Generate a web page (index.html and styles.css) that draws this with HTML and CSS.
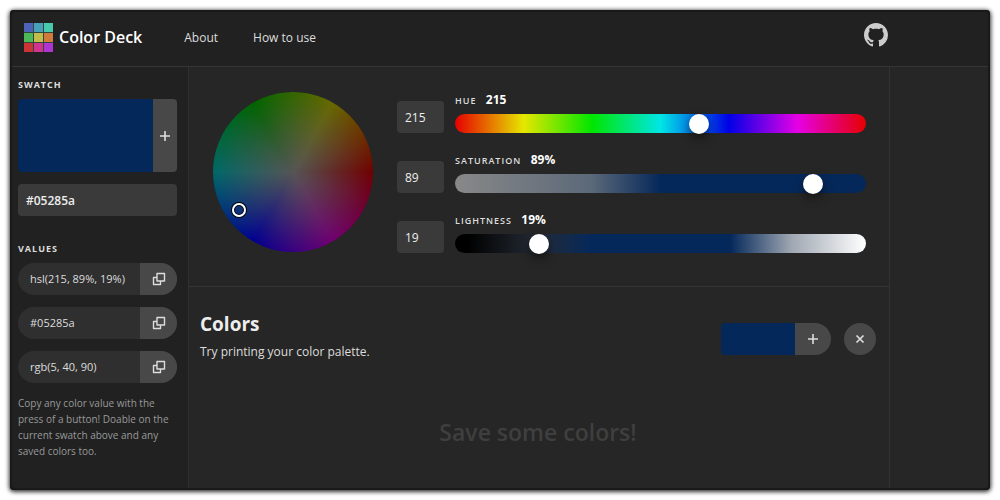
FILE: index.html
```html
<!DOCTYPE html>
<html lang="en">
<head>
  <meta charset="UTF-8" />
  <meta name="viewport" content="width=device-width, initial-scale=1.0"/>
  <title>Color Deck</title>
  <link rel="stylesheet" href="styles.css">
</head>
<body>
  <svg class="sprite" aria-hidden="true">
    <symbol id="copy" viewBox="0 0 14 14">
      <path d="M5 1.5h7.5V9H5z M8.5 9v3.500h-7v-7H5" fill="none" stroke="currentColor" stroke-width="1.400" stroke-linejoin="round"/>
    </symbol>
    <symbol id="plus" viewBox="0 0 12 12">
      <path d="M6 1v10M1 6h10" stroke="currentColor" stroke-width="1.600"/>
    </symbol>
  </svg>

  <div class="app">
    <header class="header">
      <a class="brand" href="#">
        <svg width="29" height="29" viewBox="0 0 29 29" aria-hidden="true">
          <rect width="29" height="29" fill="#31463f"/>
          <rect width="9" height="9" fill="#4d63b9"/>
          <rect x="10" width="9" height="9" fill="#4a9fb8"/>
          <rect x="20" width="9" height="9" fill="#48c9ab"/>
          <rect y="10" width="9" height="9" fill="#4db858"/>
          <rect x="10" y="10" width="9" height="9" fill="#c2bd48"/>
          <rect x="20" y="10" width="9" height="9" fill="#d07a3c"/>
          <rect y="20" width="9" height="9" fill="#cb3437"/>
          <rect x="10" y="20" width="9" height="9" fill="#d1348f"/>
          <rect x="20" y="20" width="9" height="9" fill="#b035d0"/>
        </svg>
        <span>Color Deck</span>
      </a>
      <nav class="nav">
        <a href="#about">About</a>
        <a href="#how">How to use</a>
      </nav>
      <a class="github" href="#github" aria-label="GitHub">
        <svg width="24" height="24" viewBox="0 0 16 16" fill="currentColor" aria-hidden="true">
          <path d="M8 0C3.580 0 0 3.580 0 8c0 3.540 2.290 6.530 5.470 7.590.4.070.55-.17.55-.38 0-.19-.01-.82-.01-1.490-2.010.37-2.530-.49-2.690-.94-.09-.23-.48-.94-.82-1.130-.28-.15-.68-.52-.01-.53.63-.01 1.080.58 1.230.82.72 1.210 1.870.87 2.330.66.07-.52.28-.87.51-1.070-1.780-.2-3.640-.89-3.640-3.950 0-.87.31-1.590.82-2.150-.08-.2-.36-1.020.08-2.120 0 0 .67-.21 2.200.82.64-.18 1.320-.27 2-.27s1.360.09 2 .27c1.530-1.040 2.200-.82 2.200-.82.44 1.100.16 1.920.08 2.120.51.56.82 1.270.82 2.150 0 3.070-1.870 3.750-3.650 3.950.29.25.54.73.54 1.480 0 1.070-.01 1.930-.01 2.200 0 .21.15.46.55.38A8.010 8.010 0 0 0 16 8c0-4.420-3.580-8-8-8z"/>
        </svg>
      </a>
    </header>

    <aside class="sidebar">
      <h2 class="label">Swatch</h2>
      <div class="swatch">
        <div class="swatch-color"></div>
        <button class="swatch-add" aria-label="Save color"><svg class="icon"><use href="#plus"/></svg></button>
      </div>
      <input class="field hex" type="text" value="#05285a" aria-label="Hex color">

      <h2 class="label">Values</h2>
      <div class="values">
        <div class="value">
          <span>hsl(215, 89%, 19%)</span>
          <button aria-label="Copy hsl"><svg class="icon-copy"><use href="#copy"/></svg></button>
        </div>
        <div class="value">
          <span>#05285a</span>
          <button aria-label="Copy hex"><svg class="icon-copy"><use href="#copy"/></svg></button>
        </div>
        <div class="value">
          <span>rgb(5, 40, 90)</span>
          <button aria-label="Copy rgb"><svg class="icon-copy"><use href="#copy"/></svg></button>
        </div>
      </div>
      <p class="help">Copy any color value with the press of a button! Doable on the current swatch above and any saved colors too.</p>
    </aside>

    <main class="main">
      <section class="picker">
        <div class="wheel"><div class="wheel-handle"></div></div>
        <div class="sliders">
          <div class="row">
            <input class="field" type="text" value="215" aria-label="Hue value">
            <div class="slider">
              <label for="hue">Hue <b>215</b></label>
              <input class="range hue" id="hue" type="range" min="0" max="360" value="215">
            </div>
          </div>
          <div class="row">
            <input class="field" type="text" value="89" aria-label="Saturation value">
            <div class="slider">
              <label for="saturation">Saturation <b>89%</b></label>
              <input class="range saturation" id="saturation" type="range" min="0" max="100" value="89">
            </div>
          </div>
          <div class="row">
            <input class="field" type="text" value="19" aria-label="Lightness value">
            <div class="slider">
              <label for="lightness">Lightness <b>19%</b></label>
              <input class="range lightness" id="lightness" type="range" min="0" max="100" value="19">
            </div>
          </div>
        </div>
      </section>

      <section class="colors">
        <div class="colors-head">
          <div>
            <h1>Colors</h1>
            <p>Try printing your color palette.</p>
          </div>
          <div class="actions">
            <div class="mini-swatch">
              <div class="mini-color"></div>
              <button class="mini-add" aria-label="Save color"><svg class="icon"><use href="#plus"/></svg></button>
            </div>
            <button class="clear" aria-label="Clear colors">
              <svg width="10" height="10" viewBox="0 0 10 10" aria-hidden="true"><path d="M1.500 1.500l7 7M8.500 1.500l-7 7" stroke="currentColor" stroke-width="1.700"/></svg>
            </button>
          </div>
        </div>
        <p class="empty">Save some colors!</p>
      </section>
    </main>
  </div>
</body>
</html>
```

FILE: styles.css
```css
* {
  box-sizing: border-box;
}
body {
  margin: 0;
  padding: 10px;
  background: #fff;
  font-family: 'Open Sans', sans-serif;
  font-size: 12px;
  color: #ddd;
}
h1, h2, p {
  margin: 0;
}
a {
  color: inherit;
  text-decoration: none;
}
button {
  display: flex;
  align-items: center;
  justify-content: center;
  padding: 0;
  border: none;
  background: #484848;
  color: #ddd;
  cursor: pointer;
}
.sprite {
  display: none;
}
.icon {
  width: 12px;
  height: 12px;
}
.icon-copy {
  width: 14px;
  height: 14px;
}

.app {
  display: grid;
  grid-template-columns: 179px minmax(0, 1fr) 100px;
  grid-template-rows: 57px 1fr;
  min-height: calc(100vh - 20px);
  background: #262626;
  border-radius: 4px;
  overflow: hidden;
  box-shadow: 0 1px 4px 1px rgba(0, 0, 0, 0.8);
}
/* darker rim around the window */
.app::after {
  content: "";
  position: absolute;
  inset: 10px;
  border: 2px solid #191919;
  border-radius: 4px;
  pointer-events: none;
}

.header {
  grid-column: 1 / -1;
  display: flex;
  align-items: center;
  padding: 0 102px 2px 14px;
  background: #212121;
  border-bottom: 1px solid #353535;
}
.brand {
  display: flex;
  align-items: center;
  gap: 6px;
  font-size: 16px;
  font-weight: 600;
  color: #fff;
}
.nav {
  display: flex;
  gap: 35px;
  margin-left: 42px;
}
.github {
  height: 24px;
  margin: 0 0 4px auto;
  color: #ccc;
}

.sidebar {
  padding: 10px 11px 20px 8px;
  background: #212121;
  border-right: 1px solid #303030;
}
.label {
  margin-bottom: 6px;
  font-size: 9px;
  line-height: 16px;
  font-weight: 700;
  letter-spacing: 1px;
  text-transform: uppercase;
}
.swatch {
  display: flex;
  height: 73px;
  margin-bottom: 12px;
  border-radius: 4px;
  overflow: hidden;
}
.swatch-color {
  flex: 1;
  background: #05285a;
}
.swatch-add {
  width: 24px;
}
.field {
  width: 47px;
  height: 32px;
  padding: 0 8px;
  border: none;
  border-radius: 4px;
  background: #3a3a3a;
  color: #eee;
  font: inherit;
}
.hex {
  width: 100%;
  margin-bottom: 25px;
  font-weight: 600;
}
.values {
  display: flex;
  flex-direction: column;
  gap: 12px;
}
.value {
  display: flex;
  height: 32px;
  border-radius: 16px;
  overflow: hidden;
  background: #2f2f2f;
}
.value span {
  flex: 1;
  padding-left: 12px;
  font-size: 11px;
  line-height: 32px;
}
.value button {
  width: 37px;
}
.help {
  margin-top: 12px;
  font-size: 10px;
  line-height: 16px;
  color: #999;
}

.main {
  border-right: 1px solid #323232;
}
.picker {
  display: flex;
  align-items: flex-start;
  gap: 24px;
  padding: 25px 23px 33px 24px;
  border-bottom: 1px solid #353535;
}
.wheel {
  position: relative;
  flex: none;
  width: 160px;
  height: 160px;
  border-radius: 50%;
  background:
    radial-gradient(closest-side, #555, rgba(85, 85, 85, 0)),
    conic-gradient(from 90deg, #700000, #700070, #000090, #006868, #006400, #686800, #700000);
}
.wheel-handle {
  position: absolute;
  left: 19px;
  top: 111px;
  width: 14px;
  height: 14px;
  border: 2px solid #fff;
  border-radius: 50%;
  box-shadow: 0 0 0 1px #000, inset 0 0 0 1px #000;
}
.sliders {
  flex: 1;
  display: flex;
  flex-direction: column;
  gap: 19px;
}
.row {
  display: flex;
  align-items: flex-end;
  gap: 11px;
}
.slider {
  flex: 1;
  display: flex;
  flex-direction: column;
  gap: 5px;
}
.slider label {
  font-size: 9px;
  line-height: 16px;
  font-weight: 600;
  letter-spacing: 1px;
  text-transform: uppercase;
}
.slider b {
  margin-left: 6px;
  font-size: 12px;
  font-weight: 700;
  letter-spacing: 0;
  color: #fff;
}
.range {
  appearance: none;
  width: 100%;
  height: 19px;
  margin: 0;
  border-radius: 10px;
}
.range::-webkit-slider-thumb {
  appearance: none;
  width: 20px;
  height: 20px;
  border-radius: 50%;
  background: #fff;
  box-shadow: 0 4px 10px rgba(0, 0, 0, 0.5);
}
.hue {
  background: linear-gradient(to right, #e60000, #e6e600, #00e600, #00e6e6, #0000e6, #e600e6, #e60000);
}
.saturation {
  background: linear-gradient(to right, #888, #5c6979 33%, #05285a 50%);
}
.lightness {
  background: linear-gradient(to right, #000 3%, #252c36 20%, #05285a 33%, #05285a 67%, #a0a8b3 82%, #fff);
}

.colors {
  padding: 23px 13px 24px 11px;
}
.colors-head {
  display: flex;
  justify-content: space-between;
  align-items: center;
}
.colors h1 {
  font-size: 19px;
  line-height: 28px;
  color: #eee;
}
.colors-head p {
  margin-top: 4px;
  line-height: 20px;
}
.actions {
  display: flex;
  gap: 13px;
  padding-top: 6px;
}
.mini-swatch {
  display: flex;
  height: 32px;
  border-radius: 4px 16px 16px 4px;
  overflow: hidden;
}
.mini-color {
  width: 74px;
  background: #05285a;
}
.mini-add {
  width: 36px;
}
.clear {
  width: 32px;
  height: 32px;
  border-radius: 50%;
}
.empty {
  margin-top: 54px;
  text-align: center;
  font-size: 23px;
  line-height: 32px;
  font-weight: 600;
  color: #3f3f3f;
}
```
